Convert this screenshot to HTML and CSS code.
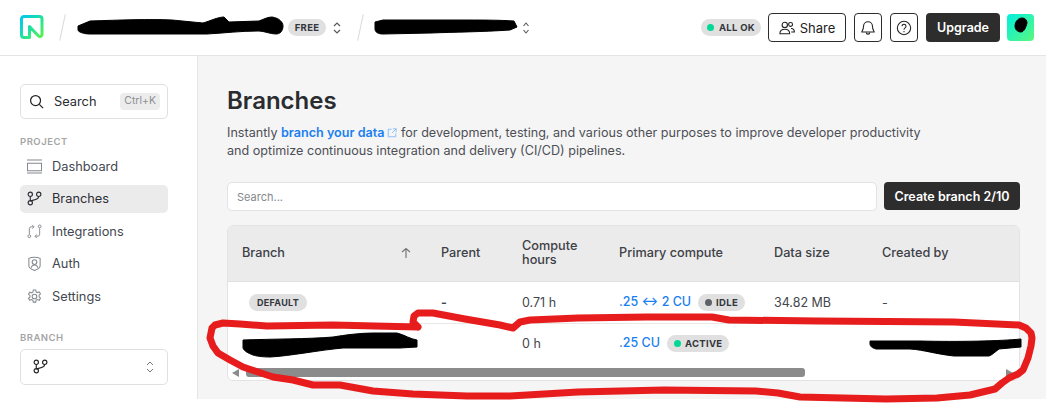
FILE: index.html
```html
<!DOCTYPE html>
<html lang="en">
<head>
<meta charset="utf-8">
<title>Branches</title>
<link rel="stylesheet" href="styles.css">
</head>
<body>
<div class="app">
  <header class="topbar">
    <svg class="logo" viewBox="0 0 24 24" width="24" height="24" fill="none">
      <defs>
        <linearGradient id="lg" x1="0" y1="0" x2="1" y2="1">
          <stop offset="0" stop-color="#00c8f0"/><stop offset=".5" stop-color="#20e0a0"/><stop offset="1" stop-color="#5cf24e"/>
        </linearGradient>
      </defs>
      <path d="M22 20V4a2.500 2.500 0 0 0-2.500-2.500H4A2.500 2.500 0 0 0 1.500 4v16A2.500 2.500 0 0 0 4 22.500h5.500V11.500l9 9.500c1.500 1 3.500 0 3.500-1" stroke="url(#lg)" stroke-width="3" stroke-linejoin="round"/>
    </svg>
    <span class="slash first"></span>
    <span class="org">&nbsp;</span>
    <span class="pill free">FREE</span>
    <svg class="updown" viewBox="0 0 10 16" width="10" height="16" fill="none"><path d="M2 6l3-3 3 3M2 10l3 3 3-3" stroke="#55585e" stroke-width="1.200"/></svg>
    <span class="slash"></span>
    <span class="project">&nbsp;</span>
    <svg class="updown" viewBox="0 0 10 16" width="10" height="16" fill="none"><path d="M2.500 6l2.500-3 2.500 3M2.500 10l2.500 3 2.500-3" stroke="#55585e" stroke-width="1.100"/></svg>
    <div class="topright">
      <span class="pill status"><i class="dot green"></i>ALL OK</span>
      <button class="btn share">
        <svg viewBox="0 0 18 18" width="16" height="16" fill="none" stroke="#222" stroke-width="1.200"><circle cx="6.500" cy="5.500" r="3"/><path d="M1 15.500c0-3 2-5 5.500-5s5.500 2 5.500 5z"/><circle cx="13" cy="5" r="2.200"/><path d="M13.500 9.500c2.300 0 3.800 1.500 3.800 4h-3.500"/></svg>
        Share
      </button>
      <button class="btn square">
        <svg viewBox="0 0 18 18" width="16" height="16" fill="none" stroke="#222" stroke-width="1.200"><path d="M9 2a5 5 0 0 0-5 5c0 4-2 5.500-2 6.500h14c0-1-2-2.500-2-6.500a5 5 0 0 0-5-5z"/><path d="M7 14c0 2.500 4 2.500 4 0"/></svg>
      </button>
      <button class="btn square">
        <svg viewBox="0 0 18 18" width="16" height="16" fill="none" stroke="#222" stroke-width="1.200"><circle cx="9" cy="9" r="7.500"/><path d="M6.800 7a2.200 2.200 0 1 1 3.400 1.900c-.8.500-1.200 1-1.200 2"/><path d="M9 12.500v1.200"/></svg>
      </button>
      <button class="upgrade">Upgrade</button>
      <span class="avatar"></span>
    </div>
  </header>
  <div class="body">
    <aside class="sidebar">
      <div class="side-search">
        <svg viewBox="0 0 16 16" width="15" height="15" fill="none" stroke="#222" stroke-width="1.300"><circle cx="7" cy="7" r="5.300"/><path d="M11 11l4 4"/></svg>
        <span class="side-search-label">Search</span>
        <kbd class="kbd">Ctrl+K</kbd>
      </div>
      <div class="side-title">PROJECT</div>
      <nav class="nav">
        <a class="nav-item">
          <svg viewBox="0 0 16 16" width="15" height="15" fill="none" stroke="#85888e" stroke-width="1.100"><path d="M0 1h16M0 15h16M.5 4.500h15v8h-15z"/></svg>
          Dashboard</a>
        <a class="nav-item active">
          <svg viewBox="0 0 16 16" width="15" height="15" fill="none" stroke="#2b2e34" stroke-width="1.200"><circle cx="3.500" cy="3.500" r="2.300"/><circle cx="12.500" cy="3.500" r="2.300"/><circle cx="3.500" cy="12.500" r="2.300"/><path d="M3.500 5.800v4.400M12.500 5.800c0 3-3.500 3.500-9 4.800"/></svg>
          Branches</a>
        <a class="nav-item">
          <svg viewBox="0 0 16 16" width="15" height="15" fill="none" stroke="#85888e" stroke-width="1"><circle cx="2.500" cy="13" r="1.500"/><circle cx="13.500" cy="2.500" r="1.500"/><path d="M2.500 11V5a2 2 0 0 1 2-2H7M5.500 5L7.500 3l-2-2M13.500 4.500V11a2 2 0 0 1-2 2H9M10.500 11l-2 2 2 2"/></svg>
          Integrations</a>
        <a class="nav-item">
          <svg viewBox="0 0 16 16" width="15" height="15" fill="none" stroke="#85888e" stroke-width="1.100"><path d="M2 2.500c3-1.500 9-1.500 12 0v8c0 2-3 4-6 5-3-1-6-3-6-5z"/><circle cx="8" cy="6.500" r="2.500"/><path d="M4.500 12.500c.5-2 2-3 3.500-3s3 1 3.500 3"/></svg>
          Auth</a>
        <a class="nav-item">
          <svg viewBox="0 0 16 16" width="15" height="15" fill="none" stroke="#85888e" stroke-width="1.100"><circle cx="8" cy="8" r="2.500"/><path d="M6.700 1h2.600l.4 2 1.500.8 1.900-.8 1.300 2.300-1.500 1.300v1.800l1.500 1.300-1.300 2.300-1.900-.8-1.500.8-.4 2H6.700l-.4-2-1.500-.8-1.900.8L1.600 10l1.500-1.300V6.900L1.600 5.600l1.300-2.300 1.900.8 1.500-.8z"/></svg>
          Settings</a>
      </nav>
      <div class="side-title branch-title">BRANCH</div>
      <div class="branch-select">
        <svg viewBox="0 0 16 16" width="15" height="15" fill="none" stroke="#222" stroke-width="1.200"><circle cx="3.500" cy="3.500" r="2.300"/><circle cx="12.500" cy="3.500" r="2.300"/><circle cx="3.500" cy="12.500" r="2.300"/><path d="M3.500 5.800v4.400M12.500 5.800c0 3-3.500 3.500-9 4.800"/></svg>
        <svg class="updown" viewBox="0 0 10 16" width="10" height="16" fill="none"><path d="M2 6l3-3 3 3M2 10l3 3 3-3" stroke="#77797e" stroke-width="1"/></svg>
      </div>
    </aside>
    <main class="main">
      <h1 class="title">Branches</h1>
      <p class="intro">Instantly <a class="link">branch your data<svg viewBox="0 0 12 12" width="10" height="10" fill="none" stroke="#7db4f5" stroke-width="1"><path d="M5.500 1.500h-4v9h9v-4M7 1h4v4M11 1L6 6"/></svg></a> for development, testing, and various other purposes to improve developer productivity<br>and optimize continuous integration and delivery (CI/CD) pipelines.</p>
      <div class="toolbar">
        <input class="search" placeholder="Search...">
        <button class="upgrade create">Create branch 2/10</button>
      </div>
      <div class="card">
        <table class="table">
          <colgroup><col class="c1"><col class="c2"><col class="c3"><col class="c4"><col class="c5"><col class="c6"></colgroup>
          <thead>
            <tr>
              <th><span class="th-sort">Branch<svg viewBox="0 0 12 12" width="12" height="12" fill="none" stroke="#777" stroke-width="1.200"><path d="M6 11V1.500M2 5l4-3.500L10 5"/></svg></span></th>
              <th>Parent</th>
              <th>Compute<br>hours</th>
              <th>Primary compute</th>
              <th>Data size</th>
              <th>Created by</th>
            </tr>
          </thead>
          <tbody>
            <tr>
              <td><span class="pill default">DEFAULT</span></td>
              <td class="strong">-</td>
              <td>0.71 h</td>
              <td><span class="cu">.25 ↔ 2 CU</span><span class="pill small"><i class="dot grey"></i>IDLE</span></td>
              <td>34.82 MB</td>
              <td>-</td>
            </tr>
            <tr class="second">
              <td></td>
              <td></td>
              <td>0 h</td>
              <td><span class="cu">.25 CU</span><span class="pill small"><i class="dot green"></i>ACTIVE</span></td>
              <td></td>
              <td></td>
            </tr>
          </tbody>
        </table>
        <div class="scrollbar">
          <i class="arrow left"></i>
          <div class="track"><div class="thumb"></div></div>
          <i class="arrow right"></i>
        </div>
      </div>
    </main>
  </div>
</div>
<svg class="ink" viewBox="0 0 1046 403" width="1046" height="403" fill="none">
  <g fill="#000" stroke="#000" stroke-width="1" stroke-linejoin="round">
    <path d="M78 26L90 21C120 20 150 19 172 20L203 23C210 21 218 17 224 17L229 22L259 21C264 19 268 17 272 17C279 18 283 22 283 26C283 31 280 34 276 34C270 34 264 31 259 31C240 31 225 33 207 34L138 34L90 34C84 34 78 32 78 30z"/>
    <path d="M375 22L383 20L459 20C480 20 500 20 514 21L517 27L510 30C480 32 455 32 431 33L383 34C378 34 375 32 375 29z"/>
    <path d="M243 340C270 339 310 339 333 337C345 335 360 333 373 333L397 333C405 335 410 339 417 340L417 347L400 348L343 348C320 350 290 356 270 357C262 357 256 356 253 355C248 353 244 351 243 348z"/>
    <path d="M870 341L920 341C960 342 1000 341 1021 339L1021 347L999 349C995 352 992 355 989 356L954 356C935 354 925 350 910 349L876 349C872 348 870 346 870 344z"/>
    <path d="M1022 18c3 0 5 2 5 5-1 4-3 9-6 9-3 0-6-2-6-6 0-4 3-8 7-8z"/>
  </g>
  <polyline stroke="#e71d1d" stroke-width="7" stroke-linejoin="round" stroke-linecap="round" points="418,327 375,326 333,325 267,326 240,324 223,323 215,325 212,328 210,338 213,346 218,353 230,360 243,367 258,372 273,377 293,380 313,385 340,385 373,391 413,394 467,396 510,396 578,392 664,390 756,391 778,393 800,397 886,399 937,398 970,395 995,389 1002,383 1009,378 1018,374 1023,370 1028,358 1031,346 1032,338 1031,333 1026,328 1019,325 954,322 818,321 729,320 712,317 647,317 578,318 530,320 520,322 513,328 500,325 465,319 433,313 418,313 414,316 413,322 418,327"/>
</svg>
</body>
</html>
```

FILE: styles.css
```css
* { box-sizing: border-box; }
html, body { margin: 0; padding: 0; background: #fff; }
body { font-family: Inter, "Liberation Sans", sans-serif; color: #2a2c30; width: 1046px; height: 403px; overflow: hidden; position: relative; }
.app { height: 399px; display: flex; flex-direction: column; overflow: hidden; }

.topbar { height: 56px; flex: none; display: flex; align-items: center; padding: 0 12px 0 20px; border-bottom: 1px solid #e4e5e7; background: #fff; }
.logo { flex: none; margin-top: -1px; }
.slash { width: 1px; height: 27px; background: #d9dadc; transform: rotate(12deg); flex: none; margin: 0 14px 0 18px; }
.slash.first { margin: 0 20px 0 18px; }
.org { width: 193px; flex: none; margin: 0 12px 0 0; }
.project { width: 131px; flex: none; margin: 0 4px 0 5px; }
.pill { display: inline-flex; align-items: center; gap: 5px; height: 17px; padding: 0 7px; border-radius: 9px; background: #e0e0e0; color: #33363c; font-size: 9.500px; font-weight: 700; letter-spacing: .3px; white-space: nowrap; }
.free { width: 38px; justify-content: center; padding: 0; }
.updown { flex: none; margin-left: 6px; }
.topright { margin-left: auto; display: flex; align-items: center; }
.status { margin-right: 7px; padding: 0 6px; }
.dot { width: 7px; height: 7px; border-radius: 50%; flex: none; display: block; }
.green { background: #00d995; }
.grey { background: #5f6166; }
.btn { height: 29px; display: inline-flex; align-items: center; justify-content: center; gap: 5px; background: #fff; border: 1px solid #2a2c30; border-radius: 4px; color: #222; font: 400 13px Inter, sans-serif; padding: 0; }
.share { width: 78px; margin-right: 8px; }
.square { width: 28px; margin-right: 8px; }
.upgrade { height: 29px; width: 74px; border: 0; border-radius: 4px; background: #2d2d2d; color: #fff; font: 600 12.500px Inter, sans-serif; padding: 0; }
.avatar { width: 27px; height: 27px; border-radius: 4px; margin-left: 7px; background: linear-gradient(135deg, #00f0e0, #5cf77c); }

.body { flex: 1; display: flex; min-height: 0; }
.sidebar { width: 198px; flex: none; background: #fff; border-right: 1px solid #e4e5e7; padding: 28px 29px 0 20px; }
.side-search { height: 35px; border: 1px solid #dfe0e2; border-radius: 5px; display: flex; align-items: center; padding: 0 7px 0 8px; font-size: 12.800px; }
.side-search-label { margin-left: 10px; flex: 1; }
.kbd { font: 400 10.500px Inter, sans-serif; color: #8d9096; background: #ececec; border-radius: 4px; padding: 0 4px; height: 17px; line-height: 16px; }
.side-title { font-size: 9.500px; font-weight: 600; letter-spacing: .5px; color: #a5a5a5; margin-top: 17px; height: 12px; line-height: 12px; }
.nav { display: flex; flex-direction: column; gap: 4px; margin-top: 4px; }
.nav-item { height: 28.500px; display: flex; align-items: center; gap: 10px; padding: 0 0 0 7px; border-radius: 5px; font-size: 12.800px; color: #43474f; }
.nav-item.active { background: #ebebeb; color: #2b2e36; }
.branch-title { margin-top: 21px; }
.branch-select { height: 36px; border: 1px solid #dfe0e2; border-radius: 5px; display: flex; align-items: center; justify-content: space-between; padding: 0 12px 0 12px; margin-top: 5px; }
.branch-select .updown { margin: 0; }

.main { flex: 1; min-width: 0; background: #f5f5f5; padding: 29px 26px 0 29px; }
.title { margin: 0; font-size: 24px; font-weight: 600; line-height: 32px; color: #2a2c30; }
.intro { margin: 7px 0 0; font-size: 12.600px; line-height: 18px; color: #4d4f55; }
.link { color: #1a7ff0; font-weight: 600; }
.link svg { margin: 0 0 -1px 3px; }
.toolbar { display: flex; gap: 7px; margin-top: 22px; align-items: flex-start; }
.search { flex: 1; min-width: 0; height: 29px; border: 1px solid #e2e3e5; border-radius: 5px; background: #fff; padding: 0 9px; font: 400 11px Inter, sans-serif; outline: none; }
.search::placeholder { color: #85888e; opacity: 1; }
.create { width: 136px; height: 28px; flex: none; font-size: 12.500px; }
.card { margin-top: 14px; height: 156px; border: 1px solid #e2e3e5; border-radius: 6px; background: #fff; overflow: hidden; width: 793px; }
.table { border-collapse: collapse; table-layout: fixed; width: 792px; font-size: 13px; }
.c1 { width: 199px; } .c2 { width: 81px; } .c3 { width: 97px; } .c4 { width: 155px; } .c5 { width: 108px; } .c6 { width: 152px; }
th { height: 55px; background: #ebebeb; border-bottom: 1px solid #dfe0e2; text-align: left; font-weight: 500; padding: 0 0 0 14px; color: #3d4046; line-height: 14px; font-size: 12.700px; }
.th-sort { display: flex; align-items: center; justify-content: space-between; padding-right: 15px; }
td { height: 42px; border-bottom: 1px solid #e8e8e8; padding: 0 0 0 14px; color: #43464c; font-size: 12.500px; }
.second td { height: 41px; border-bottom: 0; }
.strong { font-weight: 700; }
.default { padding: 0 8px; margin-left: 7px; font-size: 9px; }
.cu { color: #1a7ff0; font-weight: 500; }
.small { margin-left: 7px; padding: 0 7px; gap: 4px; }
.scrollbar { height: 9px; display: flex; align-items: center; padding: 0 6px 0 4px; margin-top: 4px; }
.track { flex: 1; height: 9px; margin: 0 7px; }
.thumb { width: 559px; height: 9px; border-radius: 3px; background: #8b8b8b; }
.arrow { width: 0; height: 0; border: 4px solid transparent; display: block; flex: none; }
.arrow.left { border-left: 0; border-right: 7px solid #8b8b8b; }
.arrow.right { border-right: 0; border-left: 7px solid #8b8b8b; }

.ink { position: absolute; left: 0; top: 0; pointer-events: none; }
```
